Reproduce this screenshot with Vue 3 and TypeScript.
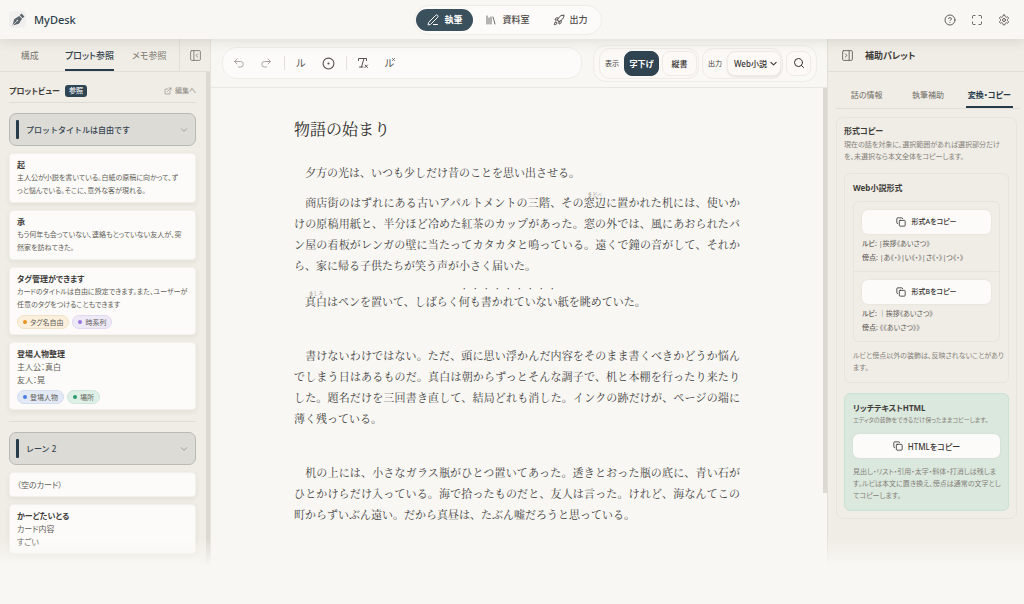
<script setup lang="ts">
import { ref } from 'vue'

interface Tag { label: string; tone: string }
interface Card { title?: string; lines: string[]; tags?: Tag[]; brief?: boolean }
interface Lane { title: string; cards: Card[] }

const lanes: Lane[] = [
  {
    title: 'プロットタイトルは自由です',
    cards: [
      { title: '起', lines: ['主人公が小説を書いている。白紙の原稿に向かって、ず', 'っと悩んでいる。そこに、意外な客が現れる。'] },
      { title: '承', lines: ['もう何年も会っていない、連絡もとっていない友人が、突', '然家を訪ねてきた。'] },
      {
        title: 'タグ管理ができます',
        lines: ['カードのタイトルは自由に設定できます。また、ユーザーが', '任意のタグをつけることもできます'],
        tags: [{ label: 'タグ名自由', tone: 'amber' }, { label: '時系列', tone: 'violet' }],
      },
      {
        title: '登場人物整理',
        lines: ['主人公：真白', '友人：晃'],
        tags: [{ label: '登場人物', tone: 'blue' }, { label: '場所', tone: 'green' }],
        brief: true,
      },
    ],
  },
  {
    title: 'レーン 2',
    cards: [
      { lines: ['（空のカード）'], brief: true },
      { title: 'かーどたいとる', lines: ['カード内容', 'すごい'], brief: true },
    ],
  },
]

const formats = [
  { name: '形式Aをコピー', ruby: '|挨拶《あいさつ》', dots: '|あ《・》|い《・》|さ《・》|つ《・》' },
  { name: '形式Bをコピー', ruby: '｜挨拶《あいさつ》', dots: '《《あいさつ》》' },
]

const leftTabs = ['構成', 'プロット参照', 'メモ参照']
const leftTab = ref('プロット参照')
const rightTabs = ['話の情報', '執筆補助', '変換・コピー']
const rightTab = ref('変換・コピー')
const output = ref('Web小説')
</script>

<template>
  <div class="app" lang="ja">
    <header class="top">
      <div class="brand">
        <span class="logo">
          <svg viewBox="0 0 24 24" width="14" height="14"><path d="M2.500 21.500 5.500 10.500 14 5l5 5-5.500 8.500z" fill="#5d656c" /><path d="m15 4 3-3 5 5-3 3z" fill="#5d656c" /><path d="m3 21 7-7" stroke="#f3f3f1" stroke-width="1.300" /><circle cx="11" cy="13" r="1.300" fill="#f3f3f1" /></svg>
        </span>
        <span class="name">MyDesk</span>
      </div>
      <nav class="modes">
        <button class="mode on">
          <svg class="ic" viewBox="0 0 24 24" width="12" height="12"><path d="M13 21h8M21.200 6.800a1 1 0 0 0-4-4L3.800 16.200a2 2 0 0 0-.5.8L2 21.400a.5.5 0 0 0 .6.6l4.400-1.300a2 2 0 0 0 .8-.5z" /></svg>執筆
        </button>
        <button class="mode">
          <svg class="ic thin" viewBox="0 0 24 24" width="12" height="12"><path d="m16 6 4 14M12 6v14M8 8v12M4 4v16" /></svg>資料室
        </button>
        <button class="mode">
          <svg class="ic" viewBox="0 0 24 24" width="12" height="12"><path d="M4.500 16.500c-1.500 1.300-2 5-2 5s3.700-.5 5-2c.7-.8.7-2.100-.1-2.900a2.200 2.200 0 0 0-2.900-.1zM12 15l-3-3a22 22 0 0 1 2-4A12.900 12.900 0 0 1 22 2c0 2.700-.8 7.500-6 11a22 22 0 0 1-4 2zM9 12H4s.6-3 2-4c1.600-1.100 5 0 5 0M12 15v5s3-.6 4-2c1.100-1.600 0-5 0-5" /></svg>出力
        </button>
      </nav>
      <div class="tools">
        <button aria-label="ヘルプ"><svg class="ic" viewBox="0 0 24 24" width="12" height="12"><circle cx="12" cy="12" r="10" /><path d="M9.100 9a3 3 0 0 1 5.800 1c0 2-3 3-3 3M12 17h.01" /></svg></button>
        <button aria-label="全画面"><svg class="ic" viewBox="0 0 24 24" width="12" height="12"><path d="M8 3H5a2 2 0 0 0-2 2v3M21 8V5a2 2 0 0 0-2-2h-3M3 16v3a2 2 0 0 0 2 2h3M16 21h3a2 2 0 0 0 2-2v-3" /></svg></button>
        <button aria-label="設定"><svg class="ic" viewBox="0 0 24 24" width="12" height="12"><path d="M12.200 2h-.4a2 2 0 0 0-2 2v.2a2 2 0 0 1-1 1.700l-.4.300a2 2 0 0 1-2 0l-.2-.1a2 2 0 0 0-2.700.7l-.2.400a2 2 0 0 0 .7 2.700l.2.100a2 2 0 0 1 1 1.700v.5a2 2 0 0 1-1 1.800l-.2.100a2 2 0 0 0-.7 2.700l.2.400a2 2 0 0 0 2.700.7l.2-.1a2 2 0 0 1 2 0l.4.300a2 2 0 0 1 1 1.700v.2a2 2 0 0 0 2 2h.4a2 2 0 0 0 2-2v-.2a2 2 0 0 1 1-1.700l.4-.3a2 2 0 0 1 2 0l.2.100a2 2 0 0 0 2.700-.7l.2-.4a2 2 0 0 0-.7-2.700l-.2-.1a2 2 0 0 1-1-1.800v-.5a2 2 0 0 1 1-1.700l.2-.1a2 2 0 0 0 .7-2.700l-.2-.4a2 2 0 0 0-2.700-.7l-.2.100a2 2 0 0 1-2 0l-.4-.3a2 2 0 0 1-1-1.700V4a2 2 0 0 0-2-2z" /><circle cx="12" cy="12" r="3" /></svg></button>
      </div>
    </header>

    <div class="work">
      <aside class="left">
        <div class="ltabs">
          <button v-for="t in leftTabs" :key="t" :class="{ on: t === leftTab }" @click="leftTab = t"><span>{{ t }}</span></button>
          <button class="fold" aria-label="パネルを閉じる"><svg class="ic thin" viewBox="0 0 24 24" width="13" height="13"><rect x="3" y="3" width="18" height="18" rx="2" /><path d="M9 3v18M16 15l-3-3 3-3" /></svg></button>
        </div>
        <div class="lbody">
          <div class="lcontent">
            <div class="viewhead">
              <h2>プロットビュー</h2><span class="badge">参照</span>
              <a href="#"><svg class="ic" viewBox="0 0 24 24" width="8" height="8"><path d="M15 3h6v6M10 14 21 3M18 13v6a2 2 0 0 1-2 2H5a2 2 0 0 1-2-2V8a2 2 0 0 1 2-2h6" /></svg>編集へ</a>
            </div>
            <section v-for="lane in lanes" :key="lane.title" class="lane">
              <button class="lanehead"><i></i><span>{{ lane.title }}</span><svg class="ic" viewBox="0 0 24 24" width="8" height="8"><path d="m4 8 8 8 8-8" /></svg></button>
              <article v-for="(c, i) in lane.cards" :key="i" class="card" :class="{ brief: c.brief }">
                <h3 v-if="c.title">{{ c.title }}</h3>
                <p v-for="l in c.lines" :key="l">{{ l }}</p>
                <div v-if="c.tags" class="tags"><span v-for="t in c.tags" :key="t.label" class="tag" :class="t.tone"><b></b>{{ t.label }}</span></div>
              </article>
            </section>
          </div>
          <div class="bar"></div>
        </div>
      </aside>

      <main class="center">
        <div class="toolbar">
          <div class="edit">
            <button class="dim" aria-label="元に戻す"><svg class="ic" viewBox="0 0 24 24" width="12" height="12"><path d="M8 14 3 9l5-5M3 9h12a5.500 5.500 0 0 1 0 11h-4" /></svg></button>
            <button class="dim" aria-label="やり直す"><svg class="ic" viewBox="0 0 24 24" width="12" height="12"><path d="m16 14 5-5-5-5M21 9H9a5.500 5.500 0 0 0 0 11h4" /></svg></button>
            <hr>
            <button>ル</button>
            <button aria-label="傍点"><svg class="ic" viewBox="0 0 24 24" width="13" height="13"><circle cx="12" cy="12" r="10" /><circle cx="12" cy="12" r="1" fill="currentColor" /></svg></button>
            <hr>
            <button aria-label="書式を解除"><svg class="ic" viewBox="0 0 24 24" width="12" height="12"><path d="M3 7V3h16v4M5 20h7M14 3 9 20M16 16l5 5M21 16l-5 5" /></svg></button>
            <button aria-label="ルビを解除" class="unruby">ル<svg class="ic" viewBox="0 0 8 8" width="3" height="3"><path d="m1 1 6 6M7 1 1 7" /></svg></button>
          </div>
          <div class="view">
            <div class="group"><span>表示</span><button class="on">字下げ</button><button>縦書</button></div>
            <div class="group">
              <label for="out">出力</label>
              <div class="pick">
                <select id="out" v-model="output"><option>Web小説</option></select>
                <svg class="ic" viewBox="0 0 24 24" width="7" height="7"><path d="m3 8 9 9 9-9" /></svg>
              </div>
            </div>
            <button class="find" aria-label="検索"><svg class="ic" viewBox="0 0 24 24" width="12" height="12"><circle cx="11" cy="11" r="8" /><path d="m21 21-4.300-4.300" /></svg></button>
          </div>
        </div>
        <div class="page">
          <div class="doc">
            <h1>物語の始まり</h1>
            <p>　夕方の光は、いつも少しだけ昔のことを思い出させる。</p>
            <p>　商店街のはずれにある古いアパルトメントの三階、その<ruby>窓辺<rt>まどべ</rt></ruby>に置かれた机には、使いかけの原稿用紙と、半分ほど冷めた紅茶のカップがあった。窓の外では、風にあおられたパン屋の看板がレンガの壁に当たってカタカタと鳴っている。遠くで鐘の音がして、それから、家に帰る子供たちが笑う声が小さく届いた。</p>
            <p>　<ruby>真白<rt>ましろ</rt></ruby>はペンを置いて、しばらく<em>何も書かれていない</em>紙を眺めていた。</p>
            <p class="scene">　書けないわけではない。ただ、頭に思い浮かんだ内容をそのまま書くべきかどうか悩んでしまう日はあるものだ。真白は朝からずっとそんな調子で、机と本棚を行ったり来たりした。題名だけを三回書き直して、結局どれも消した。インクの跡だけが、ページの端に薄く残っている。</p>
            <p class="scene">　机の上には、小さなガラス瓶がひとつ置いてあった。透きとおった瓶の底に、青い石がひとかけらだけ入っている。海で拾ったものだと、友人は言った。けれど、海なんてこの町からずいぶん遠い。だから真昼は、たぶん嘘だろうと思っている。</p>
          </div>
          <div class="bar"></div>
        </div>
      </main>

      <aside class="right">
        <div class="rhead"><button aria-label="パネルを閉じる"><svg class="ic thin" viewBox="0 0 24 24" width="13" height="13"><rect x="3" y="3" width="18" height="18" rx="2" /><path d="M15 3v18M8 9l3 3-3 3" /></svg></button><h2>補助パレット</h2></div>
        <div class="rtabs"><button v-for="t in rightTabs" :key="t" :class="{ on: t === rightTab }" @click="rightTab = t">{{ t }}</button></div>
        <section class="copy">
          <h3>形式コピー</h3>
          <p class="note">現在の話を対象に、選択範囲があれば選択部分だけを、未選択なら本文全体をコピーします。</p>
          <div class="box">
            <h3>Web小説形式</h3>
            <div class="formats">
              <div v-for="f in formats" :key="f.name" class="format">
                <button class="copybtn"><svg class="ic" viewBox="0 0 24 24" width="10" height="10"><rect x="8" y="8" width="14" height="14" rx="2" /><path d="M4 16a2 2 0 0 1-2-2V4a2 2 0 0 1 2-2h10a2 2 0 0 1 2 2" /></svg>{{ f.name }}</button>
                <p><b>ルビ:</b> {{ f.ruby }}</p>
                <p><b>傍点:</b> {{ f.dots }}</p>
              </div>
            </div>
            <p class="note">ルビと傍点以外の装飾は、反映されないことがあります。</p>
          </div>
          <div class="box green">
            <h3>リッチテキストHTML</h3>
            <p class="note small">エディタの装飾をできるだけ保ったままコピーします。</p>
            <button class="copybtn"><svg class="ic" viewBox="0 0 24 24" width="10" height="10"><rect x="8" y="8" width="14" height="14" rx="2" /><path d="M4 16a2 2 0 0 1-2-2V4a2 2 0 0 1 2-2h10a2 2 0 0 1 2 2" /></svg>HTMLをコピー</button>
            <p class="note">見出し・リスト・引用・太字・斜体・打消しは残しま<wbr>す。ルビは本文に置き換え、傍点は通常の文字としてコピーします。</p>
          </div>
        </section>
      </aside>
    </div>
    <div class="fade"></div>
  </div>
</template>

<style>
body { margin: 0; background: #f8f7f3; }
</style>

<style scoped>
* { box-sizing: border-box; }
.app { position: relative; display: flex; flex-direction: column; height: 100vh; overflow: hidden; background: #f8f7f3; color: #3e3c39; font: 8px/13px "Noto Sans", "Noto Sans CJK JP", sans-serif; font-feature-settings: "palt"; }
h1, h2, h3, p { margin: 0; }
button, select { font: inherit; font-feature-settings: inherit; color: inherit; border: 0; background: none; padding: 0; }
button { display: flex; align-items: center; justify-content: center; }
a { color: inherit; text-decoration: none; }
.ic { fill: none; stroke: currentColor; stroke-width: 2; stroke-linecap: round; stroke-linejoin: round; flex: none; }
.ic.thin { stroke-width: 1.6; }

.top { position: relative; z-index: 2; display: grid; grid-template-columns: 1fr auto 1fr; align-items: center; height: 39px; flex: none; padding: 0 17px 0 9px; background: #f8f7f3; box-shadow: 0 2px 12px rgba(70, 65, 50, .14); }
.brand { display: flex; align-items: center; gap: 8px; }
.logo { display: grid; place-items: center; width: 17px; height: 17px; border-radius: 4px; background: #f1f0ee; }
.name { font-size: 11px; font-weight: 500; color: #2f3e4a; }
.modes { display: flex; gap: 1px; padding: 3px 2px 3px 1px; border: 1px solid #efede8; border-radius: 16px; background: #fcfbf9; }
.mode { gap: 5px; height: 22px; padding: 0 11px; border-radius: 11px; font-size: 9px; font-weight: 500; color: #4c4945; }
.mode.on { background: #3b505d; color: #fff; font-weight: 700; }
.tools { display: flex; justify-content: flex-end; gap: 15px; margin-right: -3px; color: #625f5b; }

.work { display: grid; grid-template-columns: 211px 1fr 197px; flex: 1; min-height: 0; }
.left, .right { background: #f0ede6; min-height: 0; overflow: hidden; }
.left { display: flex; flex-direction: column; border-right: 1px solid #e7e3dc; }
.ltabs { display: flex; height: 33px; flex: none; border-bottom: 1px solid #e3dfd8; font-size: 9px; color: #7a766f; }
.ltabs button { flex: 1; }
.ltabs button.fold { flex: 0 0 31px; border-left: 1px solid #e3dfd8; }
.ltabs span { display: grid; place-items: center; height: 32px; border-bottom: 2px solid transparent; border-top: 2px solid transparent; }
.ltabs .on { color: #33434f; font-weight: 500; }
.ltabs .on span { border-bottom-color: #263c4b; }
.lbody { display: grid; grid-template-columns: 1fr 4px; flex: 1; min-height: 0; }
.lcontent { padding: 7px 10px 0 9px; overflow: hidden; }
.bar { background: #dcd9d3; }
.viewhead { display: flex; align-items: center; height: 24px; gap: 5px; border-bottom: 1px solid #e0dcd5; }
h2 { font-size: 9px; font-weight: 700; }
.viewhead h2 { font-size: 8px; }
.badge { padding: 0 4px; border-radius: 3px; background: #2f4553; color: #fff; font-size: 7px; font-weight: 500; line-height: 12px; }
.viewhead a { display: flex; align-items: center; gap: 3px; margin-left: auto; font-size: 7px; color: #8e8b84; }
.lane { display: flex; flex-direction: column; gap: 7px; padding: 10px 0 11px; border-bottom: 1px solid #e0dcd5; }
.lanehead { gap: 7px; height: 33px; padding: 6px 7px 6px 6px; border: 1px solid #b9bab6; border-radius: 7px; background: #dcdbd6; color: #33434f; font-weight: 500; font-feature-settings: normal; }
.lanehead i { width: 3px; height: 19px; border-radius: 1px; background: #263c4b; }
.lanehead span { flex: 1; text-align: left; }
.lanehead .ic { color: #7d7f7d; }
.card { padding: 5px 7px; border: 1px solid #f3f1ec; border-radius: 4px; background: #fcfbf9; box-shadow: 0 2px 5px rgba(80, 70, 50, .08); color: #625e58; }
.card p { font-size: 7px; white-space: nowrap; }
.card.brief p { font-size: 8px; }
h3 { font-size: 8px; line-height: 12px; font-weight: 700; color: #3e3c39; }
.tags { display: flex; gap: 3px; margin-top: 4px; }
.tag { display: flex; align-items: center; gap: 3px; height: 14px; padding: 0 5px; border: 1px solid; border-radius: 7px; font-size: 7px; }
.tag b { width: 4px; height: 4px; border-radius: 50%; background: currentColor; }
.amber { background: #fbf0dc; border-color: #f1e2c5; } .amber b { background: #e8921f; }
.violet { background: #eee9f7; border-color: #e0d9ef; } .violet b { background: #9775e0; }
.blue { background: #e4e9f6; border-color: #d5ddf0; } .blue b { background: #4a7be8; }
.green.tag { background: #dff0e7; border-color: #cfe6da; } .green.tag b { background: #2b9d6b; }

.center { display: flex; flex-direction: column; min-width: 0; min-height: 0; }
.toolbar { display: flex; align-items: center; gap: 11px; height: 49px; flex: none; padding: 0 10px 0 11px; border-bottom: 1px solid #e9e7e2; }
.edit { display: flex; align-items: center; gap: 3px; flex: 1; height: 32px; padding: 0 4px; border: 1px solid #efede8; border-radius: 14px; background: #fcfbf9; }
.edit button { width: 24px; height: 24px; font-size: 10px; color: #55514d; }
.edit .dim { color: #aaa7a1; }
.edit hr { width: 1px; height: 14px; margin: 0 1px 0 3px; border: 0; background: #e3e0da; }
.unruby .ic { align-self: flex-start; margin: 7px 0 0 -2px; }
.view { display: flex; align-items: center; gap: 3px; padding: 2px 5px; border: 1px solid #efede8; border-radius: 13px; background: #fbf9f6; }
.group { display: flex; align-items: center; gap: 3px; height: 31px; padding: 0 1px 0 5px; border: 1px solid #efebe7; border-radius: 11px; font-size: 7px; }
.view button, .view select { height: 25px; border: 1px solid #efebe7; border-radius: 8px; background: #fcf9f7; font-size: 8px; font-weight: 500; color: #33302d; }
.group button { width: 35px; }
.group > span, .group > label { margin-right: 2px; }
.view .on { background: #2f4350; border-color: #2f4350; color: #fff; font-weight: 700; }
.pick { display: grid; align-items: center; }
.pick > * { grid-area: 1 / 1; }
.pick .ic { justify-self: end; margin-right: 4px; stroke-width: 4; pointer-events: none; }
.view select { width: 54px; padding: 0 12px 0 6px; appearance: none; box-shadow: 0 1px 2px rgba(60, 50, 40, .12); }
.view .find { width: 25px; }
.page { display: grid; grid-template-columns: 1fr 4px; flex: 1; min-height: 0; }
.page .bar { height: 405px; }
.doc { width: 446px; margin: 0 auto; font: 11px/21px "Noto Serif CJK JP", "Noto Serif JP", "Liberation Serif", "Noto Sans CJK JP", serif; font-feature-settings: normal; color: #42403d; text-align: justify; overflow: hidden; }
h1 { margin: 30px 0 22px; font: inherit; font-size: 16px; line-height: 22px; color: #2c2a27; }
.doc p { margin-bottom: 8px; }
.doc p.scene { margin-top: 33px; }
rt { font-size: 5px; line-height: 7px; color: #85817b; }
ruby, rt { ruby-align: center; }
em { font-style: normal; text-emphasis: filled dot; text-emphasis-position: over right; }

.right { border-left: 1px solid #e3dfd8; }
.rhead { display: flex; align-items: center; gap: 11px; height: 33px; padding-left: 13px; border-bottom: 1px solid #e3dfd8; color: #5f5b56; }
.rhead h2 { color: #3e3c39; }
.rtabs { display: grid; grid-template-columns: repeat(3, 1fr); justify-items: center; height: 29px; margin: 8px 4px 8px 8px; border-bottom: 1px solid #e3dfd8; color: #6f6b65; }
.rtabs button { padding: 2px 2px 0; border-bottom: 2px solid transparent; }
.rtabs .on { color: #263c4b; border-color: #263c4b; font-weight: 700; }
.copy { margin: 0 7px 0 8px; padding: 7px; border: 1px solid #e8e4dd; border-radius: 7px; }
.copy > h3 { margin-bottom: 2px; }
.note { font-size: 7px; line-height: 12px; color: #85817a; }
.box { margin-top: 10px; padding: 8px; border: 1px solid #e8e4dd; border-radius: 6px; }
.box .note { margin-right: -6px; }
.green .note { margin-right: -3px; }
.note.small { font-size: 6px; }
.copybtn { gap: 5px; width: 100%; height: 24px; border-radius: 6px; background: #fcfbfa; box-shadow: 0 0 2px rgba(80, 70, 50, .12); font-weight: 500; color: #35322f; }
.formats { margin: 7px 0 8px; border: 1px solid #e8e4dd; border-radius: 6px; }
.format { padding: 8px 8px 6px; font-size: 7px; line-height: 14px; color: #65615b; }
.format + .format { border-top: 1px solid #e8e4dd; }
.format b { font-weight: 500; }
.format .copybtn { margin-bottom: 3px; }
.box.green { background: #dbe8de; border-color: #c8e2d3; }
.green .copybtn { margin: 8px 0; }

.fade { position: absolute; inset: auto 0 0; height: 66px; background: linear-gradient(rgba(248, 247, 243, 0), #f8f7f3 28px); pointer-events: none; }
</style>
